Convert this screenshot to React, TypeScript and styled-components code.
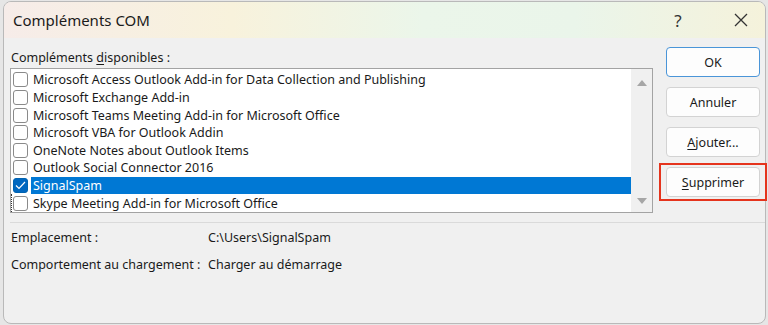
import styled, { createGlobalStyle } from 'styled-components';

const Global = createGlobalStyle`
  html, body {
    margin: 0;
    padding: 0;
    background: #e6e6e6;
    font-family: "Noto Sans", "Open Sans", sans-serif;
  }
`;

const Page = styled.div`
  width: 768px;
  height: 325px;
  overflow: hidden;
  padding: 1px 2px 0 3px;
  box-sizing: border-box;
`;

const Window = styled.div`
  width: 763px;
  height: 323px;
  box-sizing: border-box;
  border: 1px solid #b9b9b9;
  border-radius: 8px;
  background: #f0f0f0;
  display: flex;
  flex-direction: column;
`;

const TitleBar = styled.div`
  height: 36px;
  flex: none;
  display: flex;
  align-items: center;
  padding-left: 9px;
  border-radius: 7px 7px 0 0;
  background: linear-gradient(90deg, #f6ece9 0%, #f8f2dc 30%, #ebf6ea 55%, #eaf5ea 75%, #f5f2db 100%);
`;

const Title = styled.div`
  flex: 1;
  font-size: 15px;
  color: #1b1b1b;
  margin-top: -1px;
`;

const TitleButton = styled.div<{ w: number; gap?: number }>`
  width: ${(p) => p.w}px;
  margin-right: ${(p) => p.gap ?? 0}px;
  height: 36px;
  display: flex;
  align-items: center;
  justify-content: center;
  font-size: 17px;
  color: #333;
`;

const Body = styled.div`
  flex: 1;
  display: flex;
  flex-direction: column;
  padding: 9px 0 0 6px;
`;

const Top = styled.div`
  display: flex;
  gap: 13px;
`;

const LeftCol = styled.div`
  width: 643px;
  display: flex;
  flex-direction: column;
`;

const Label = styled.div`
  font-size: 12.5px;
  color: #1a1a1a;
  height: 21px;
  line-height: 22px;
  padding-left: 1px;
  u { text-decoration-thickness: 1px; text-underline-offset: 2px; }
`;

const ListBox = styled.div`
  height: 145px;
  box-sizing: border-box;
  border: 1px solid #a3a3a3;
  background: #fff;
  display: flex;
`;

const Rows = styled.div`
  flex: 1;
  padding-top: 2px;
  display: flex;
  flex-direction: column;
`;

const Row = styled.div<{ focus?: boolean }>`
  height: 17.7px;
  display: flex;
  align-items: center;
  margin-left: ${(p) => (p.focus ? 0 : 1)}px;
  border-left: ${(p) => (p.focus ? '1px dotted #333' : 'none')};
`;

const Box = styled.div<{ checked?: boolean }>`
  width: 15px;
  height: 15px;
  margin-left: 1px;
  box-sizing: border-box;
  border: 1px solid ${(p) => (p.checked ? '#0063b1' : '#8a8a8a')};
  border-radius: 3px;
  background: ${(p) => (p.checked ? '#0067c0' : '#fff')};
  display: flex;
  align-items: center;
  justify-content: center;
  flex: none;
`;

const ItemText = styled.div<{ selected?: boolean }>`
  flex: 1;
  height: 17px;
  margin-left: 3px;
  padding-left: 2px;
  font-size: 12.5px;
  line-height: 17px;
  white-space: nowrap;
  color: ${(p) => (p.selected ? '#fff' : '#1a1a1a')};
  background: ${(p) => (p.selected ? '#0078d4' : 'transparent')};
`;

const ScrollBar = styled.div`
  width: 21px;
  background: #f0f0f0;
  display: flex;
  flex-direction: column;
  justify-content: space-between;
  align-items: center;
  padding: 11px 0 8px;
`;

const Arrow = styled.div<{ down?: boolean }>`
  width: 0;
  height: 0;
  border-left: 5px solid transparent;
  border-right: 5px solid transparent;
  ${(p) => (p.down ? 'border-top: 6px solid #a6a6a6;' : 'border-bottom: 6px solid #a6a6a6;')}
`;

const RightCol = styled.div`
  display: flex;
  flex-direction: column;
  gap: 10px;
`;

const ButtonWrap = styled.div`
  position: relative;
`;

const Button = styled.div<{ primary?: boolean }>`
  width: 94px;
  height: 30px;
  box-sizing: border-box;
  border: 1px solid ${(p) => (p.primary ? '#4a95d8' : '#d3d3d3')};
  border-radius: 4px;
  background: #fdfdfd;
  display: flex;
  align-items: center;
  justify-content: center;
  font-size: 12.5px;
  color: #1a1a1a;
  u { text-decoration-thickness: 1px; text-underline-offset: 2px; }
`;

const Highlight = styled.div`
  position: absolute;
  left: -7px;
  right: -7px;
  top: -4px;
  bottom: -4px;
  border: 2px solid #e5341d;
  pointer-events: none;
`;

const Separator = styled.div`
  height: 1px;
  background: #dadada;
  margin: 9px 0 0 0;
`;

const Info = styled.div`
  display: grid;
  grid-template-columns: 197px 1fr;
  grid-auto-rows: 27px;
  align-items: center;
  padding: 1px 0 0 1px;
  font-size: 12.5px;
  color: #1a1a1a;
`;

const items = [
  'Microsoft Access Outlook Add-in for Data Collection and Publishing',
  'Microsoft Exchange Add-in',
  'Microsoft Teams Meeting Add-in for Microsoft Office',
  'Microsoft VBA for Outlook Addin',
  'OneNote Notes about Outlook Items',
  'Outlook Social Connector 2016',
  'SignalSpam',
  'Skype Meeting Add-in for Microsoft Office',
];

export default function App() {
  return (
    <Page>
      <Global />
      <Window>
        <TitleBar>
          <Title>Compléments COM</Title>
          <TitleButton w={46} gap={16}>?</TitleButton>
          <TitleButton w={48}>
            <svg width="14" height="14" viewBox="0 0 14 14">
              <path d="M1 1 L13 13 M13 1 L1 13" stroke="#333" strokeWidth="1.3" />
            </svg>
          </TitleButton>
        </TitleBar>
        <Body>
          <Top>
            <LeftCol>
              <Label>
                Compléments <u>d</u>isponibles :
              </Label>
              <ListBox>
                <Rows>
                  {items.map((t, i) => (
                    <Row key={t} focus={i === 7}>
                      <Box checked={i === 6}>
                        {i === 6 && (
                          <svg width="11" height="9" viewBox="0 0 11 9">
                            <path d="M1 4.5 L4 7.5 L10 1" fill="none" stroke="#fff" strokeWidth="1.2" />
                          </svg>
                        )}
                      </Box>
                      <ItemText selected={i === 6}>{t}</ItemText>
                    </Row>
                  ))}
                </Rows>
                <ScrollBar>
                  <Arrow />
                  <Arrow down />
                </ScrollBar>
              </ListBox>
            </LeftCol>
            <RightCol>
              <Button primary>OK</Button>
              <Button>Annuler</Button>
              <Button>
                <span>
                  <u>A</u>jouter...
                </span>
              </Button>
              <ButtonWrap>
                <Button>
                  <span>
                    <u>S</u>upprimer
                  </span>
                </Button>
                <Highlight />
              </ButtonWrap>
            </RightCol>
          </Top>
          <Separator />
          <Info>
            <span>Emplacement :</span>
            <span>C:\Users\SignalSpam</span>
            <span>Comportement au chargement :</span>
            <span>Charger au démarrage</span>
          </Info>
        </Body>
      </Window>
    </Page>
  );
}
